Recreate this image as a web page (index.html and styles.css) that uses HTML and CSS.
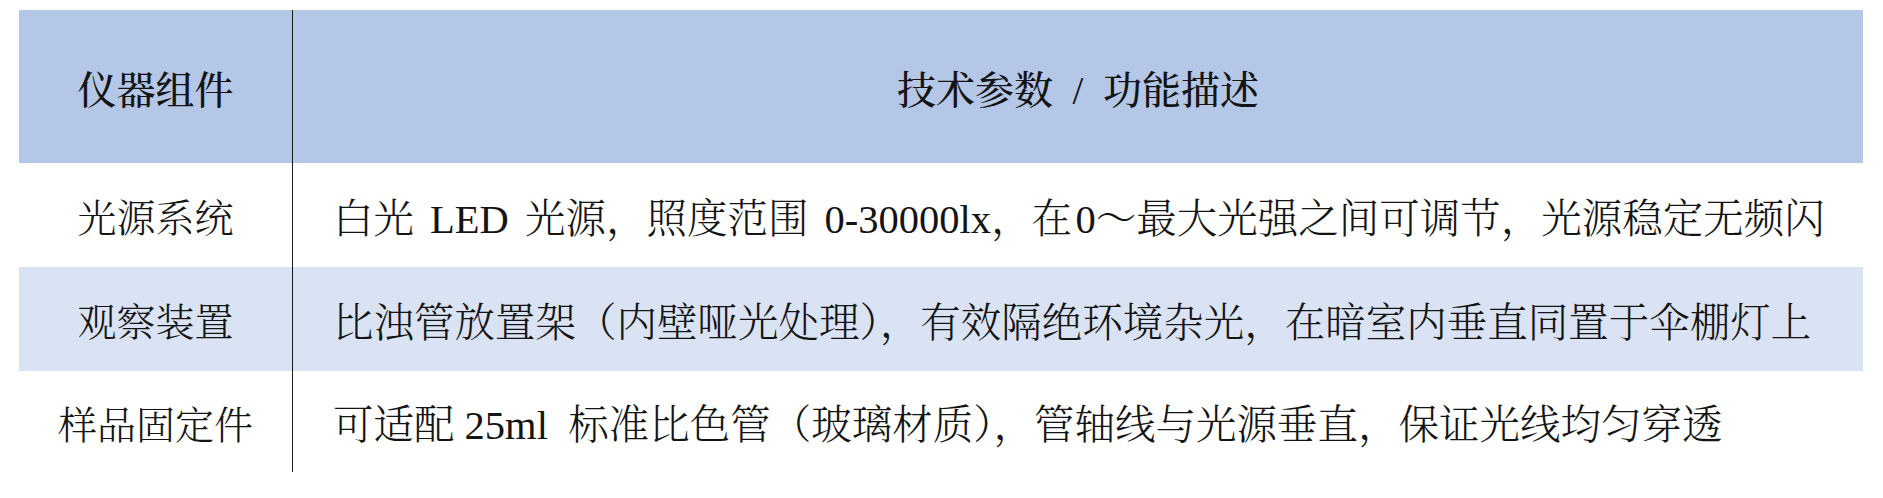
FILE: index.html
```html
<!DOCTYPE html>
<html lang="zh-CN">
<head>
<meta charset="utf-8">
<title>仪器组件</title>
<link rel="stylesheet" href="styles.css">
</head>
<body>
<div class="table">
  <div class="row head">
    <div class="c1">仪器组件</div>
    <div class="c2 center">技术参数&ensp;/&ensp;功能描述</div>
  </div>
  <div class="row">
    <div class="c1">光源系统</div>
    <div class="c2 spaced">白光 LED 光源，照度范围 0-30000lx，在&#8202;0～最大光强之间可调节，光源稳定无频闪</div>
  </div>
  <div class="row alt">
    <div class="c1">观察装置</div>
    <div class="c2">比浊管放置架（内壁哑光处理），有效隔绝环境杂光，在暗室内垂直同置于伞棚灯上</div>
  </div>
  <div class="row">
    <div class="c1">样品固定件</div>
    <div class="c2">可适配 25ml&ensp;标准比色管（玻璃材质），管轴线与光源垂直，保证光线均匀穿透</div>
  </div>
</div>
</body>
</html>
```
FILE: styles.css
```css
html, body {
  margin: 0;
  padding: 0;
  background: #ffffff;
}
body {
  font-family: "Liberation Serif", "Noto Serif CJK SC", "Noto Sans CJK SC", serif;
  color: #141414;
}
.table {
  margin: 10px 0 0 19px;
  width: 1844px;
  display: flex;
  flex-direction: column;
}
.row {
  display: flex;
  height: 104px;
}
.row.head {
  height: 153px;
  background: #b4c7e7;
}
.row.alt {
  background: #dae3f3;
}
.row:last-child {
  height: 101px;
}
.c1 {
  width: 273px;
  flex: none;
  display: flex;
  align-items: center;
  justify-content: center;
  font-size: 39px;
  font-weight: 300;
  white-space: nowrap;
}
.c2 {
  flex: 1;
  border-left: 1px solid #1a1a1a;
  display: flex;
  align-items: center;
  padding-left: 40px;
  font-size: 40.5px;
  font-weight: 300;
  white-space: pre;
}
.c2.spaced {
  word-spacing: 6px;
}
.c2.center {
  justify-content: center;
  padding-left: 0;
  font-size: 39px;
}
.head .c1, .head .c2 {
  font-weight: 500;
}
```
